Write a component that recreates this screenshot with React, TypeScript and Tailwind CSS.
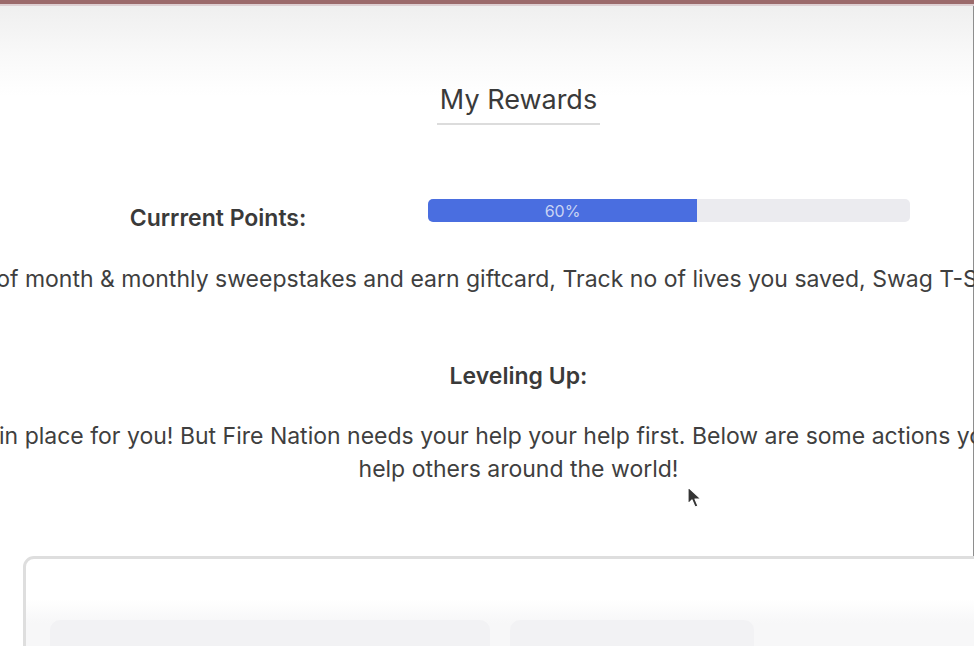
import type { ReactNode } from 'react';

function Centered({ children, className = '' }: { children: ReactNode; className?: string }) {
  return <div className={`flex flex-col items-center pl-[64px] ${className}`}>{children}</div>;
}

export default function App() {
  return (
    <div className="relative w-[974px] h-[646px] overflow-hidden bg-white font-['Inter','Liberation_Sans',Arial,sans-serif] text-[#3f3f3f]">
      {/* window chrome */}
      <div className="h-[4px] bg-[#9b6a6b]" />
      <div className="h-[2px] bg-[#ddcfd2]" />

      <main className="h-[640px] border-r border-[#8e8e8e] bg-[linear-gradient(#efefef,#f9f9f9_50px,#ffffff_90px)]">
        {/* Header */}
        <Centered className="pt-[78px]">
          <h1 className="px-[3px] pb-[7px] text-[27px] leading-[32px] text-[#3a3a3a] border-b-2 border-[#dcdcdc]">
            My Rewards
          </h1>
        </Centered>

        {/* Points */}
        <div className="mt-[74px] flex items-start">
          <div className="w-[428px] pl-[8px] pt-[5px] flex justify-center">
            <span className="text-[23px] leading-[28px] font-semibold text-[#3a3a3a]">Currrent Points:</span>
          </div>
          <div className="w-[482px] h-[23px] rounded-[5px] bg-[#ebebef] flex overflow-hidden">
            <div className="w-[269px] h-full bg-[#4a6ee0] flex items-center justify-center text-[16px] text-[#c8d3f4]">
              60%
            </div>
          </div>
        </div>

        <Centered className="mt-[33px]">
          <p className="whitespace-nowrap text-[23px] leading-[28px]">
            Win employee of month &amp; monthly sweepstakes and earn giftcard, Track no of lives you saved, Swag T-Shirts and much more
          </p>
        </Centered>

        {/* Leveling */}
        <Centered className="mt-[69px]">
          <h2 className="text-[23px] leading-[28px] font-semibold text-[#3a3a3a]">Leveling Up:</h2>
        </Centered>

        <Centered className="mt-[30px]">
          <p className="whitespace-nowrap text-center text-[23px] leading-[33px]">
            The rewards are in place for you! But Fire Nation needs your help your help first. Below are some actions you can take together to
            <br />
            help others around the world!
          </p>
        </Centered>

        {/* Actions card */}
        <div className="mt-[70px] ml-[23px] w-[1100px] h-[200px] rounded-[11px] border-[3px] border-[#dedede] bg-[linear-gradient(#ffffff_40px,#f7f7f8_64px)] pt-[61px] pl-[24px] flex gap-[20px]">
          <div className="w-[440px] h-[60px] rounded-t-[10px] bg-[#f2f2f4]" />
          <div className="w-[244px] h-[60px] rounded-t-[10px] bg-[#f2f2f4]" />
        </div>
      </main>

      {/* mouse pointer */}
      <svg className="absolute left-[686px] top-[485px]" width="18" height="26" viewBox="0 0 18 26">
        <path d="M2 2 L2 19 L6 15 L9 22 L12 21 L9 14 L15 14 Z" fill="#111" stroke="#fff" strokeWidth="1.2" strokeLinejoin="round" opacity="0.85" />
      </svg>
    </div>
  );
}
